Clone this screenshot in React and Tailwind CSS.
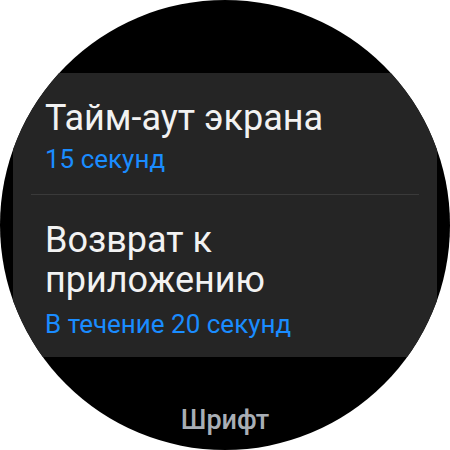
export default function App() {
  return (
    <div className="w-[450px] h-[450px] bg-white" style={{ fontFamily: "Roboto, 'Noto Sans', sans-serif" }}>
      <div className="w-[450px] h-[450px] rounded-full bg-black overflow-hidden flex flex-col items-center">
        <div className="-mt-[30px] h-[36px] text-[27px] font-medium text-[#a8aeb5] leading-[36px]">Дисплей</div>
        <div className="mt-[67px] w-[424px] bg-[#252525] rounded-b-[30px] flex flex-col">
          <div className="pl-[32px] pr-[18px] pt-[25px] pb-[19px]">
            <div className="text-[36px] leading-[40px] text-[#f2f2f2]">Тайм-аут экрана</div>
            <div className="mt-[5px] text-[26px] leading-[32px] text-[#1a8cff]">15 секунд</div>
          </div>
          <div className="mx-[18px] h-px bg-[#3a3a3a]" />
          <div className="pl-[32px] pr-[60px] pt-[25px] pb-[17px]">
            <div className="text-[36px] leading-[40px] text-[#f2f2f2]">Возврат к приложению</div>
            <div className="mt-[8px] text-[26px] leading-[32px] text-[#1a8cff]">В течение 20 секунд</div>
          </div>
        </div>
        <div className="mt-[45px] text-[27px] font-medium text-[#a8aeb5] leading-[36px]">Шрифт</div>
      </div>
    </div>
  );
}
